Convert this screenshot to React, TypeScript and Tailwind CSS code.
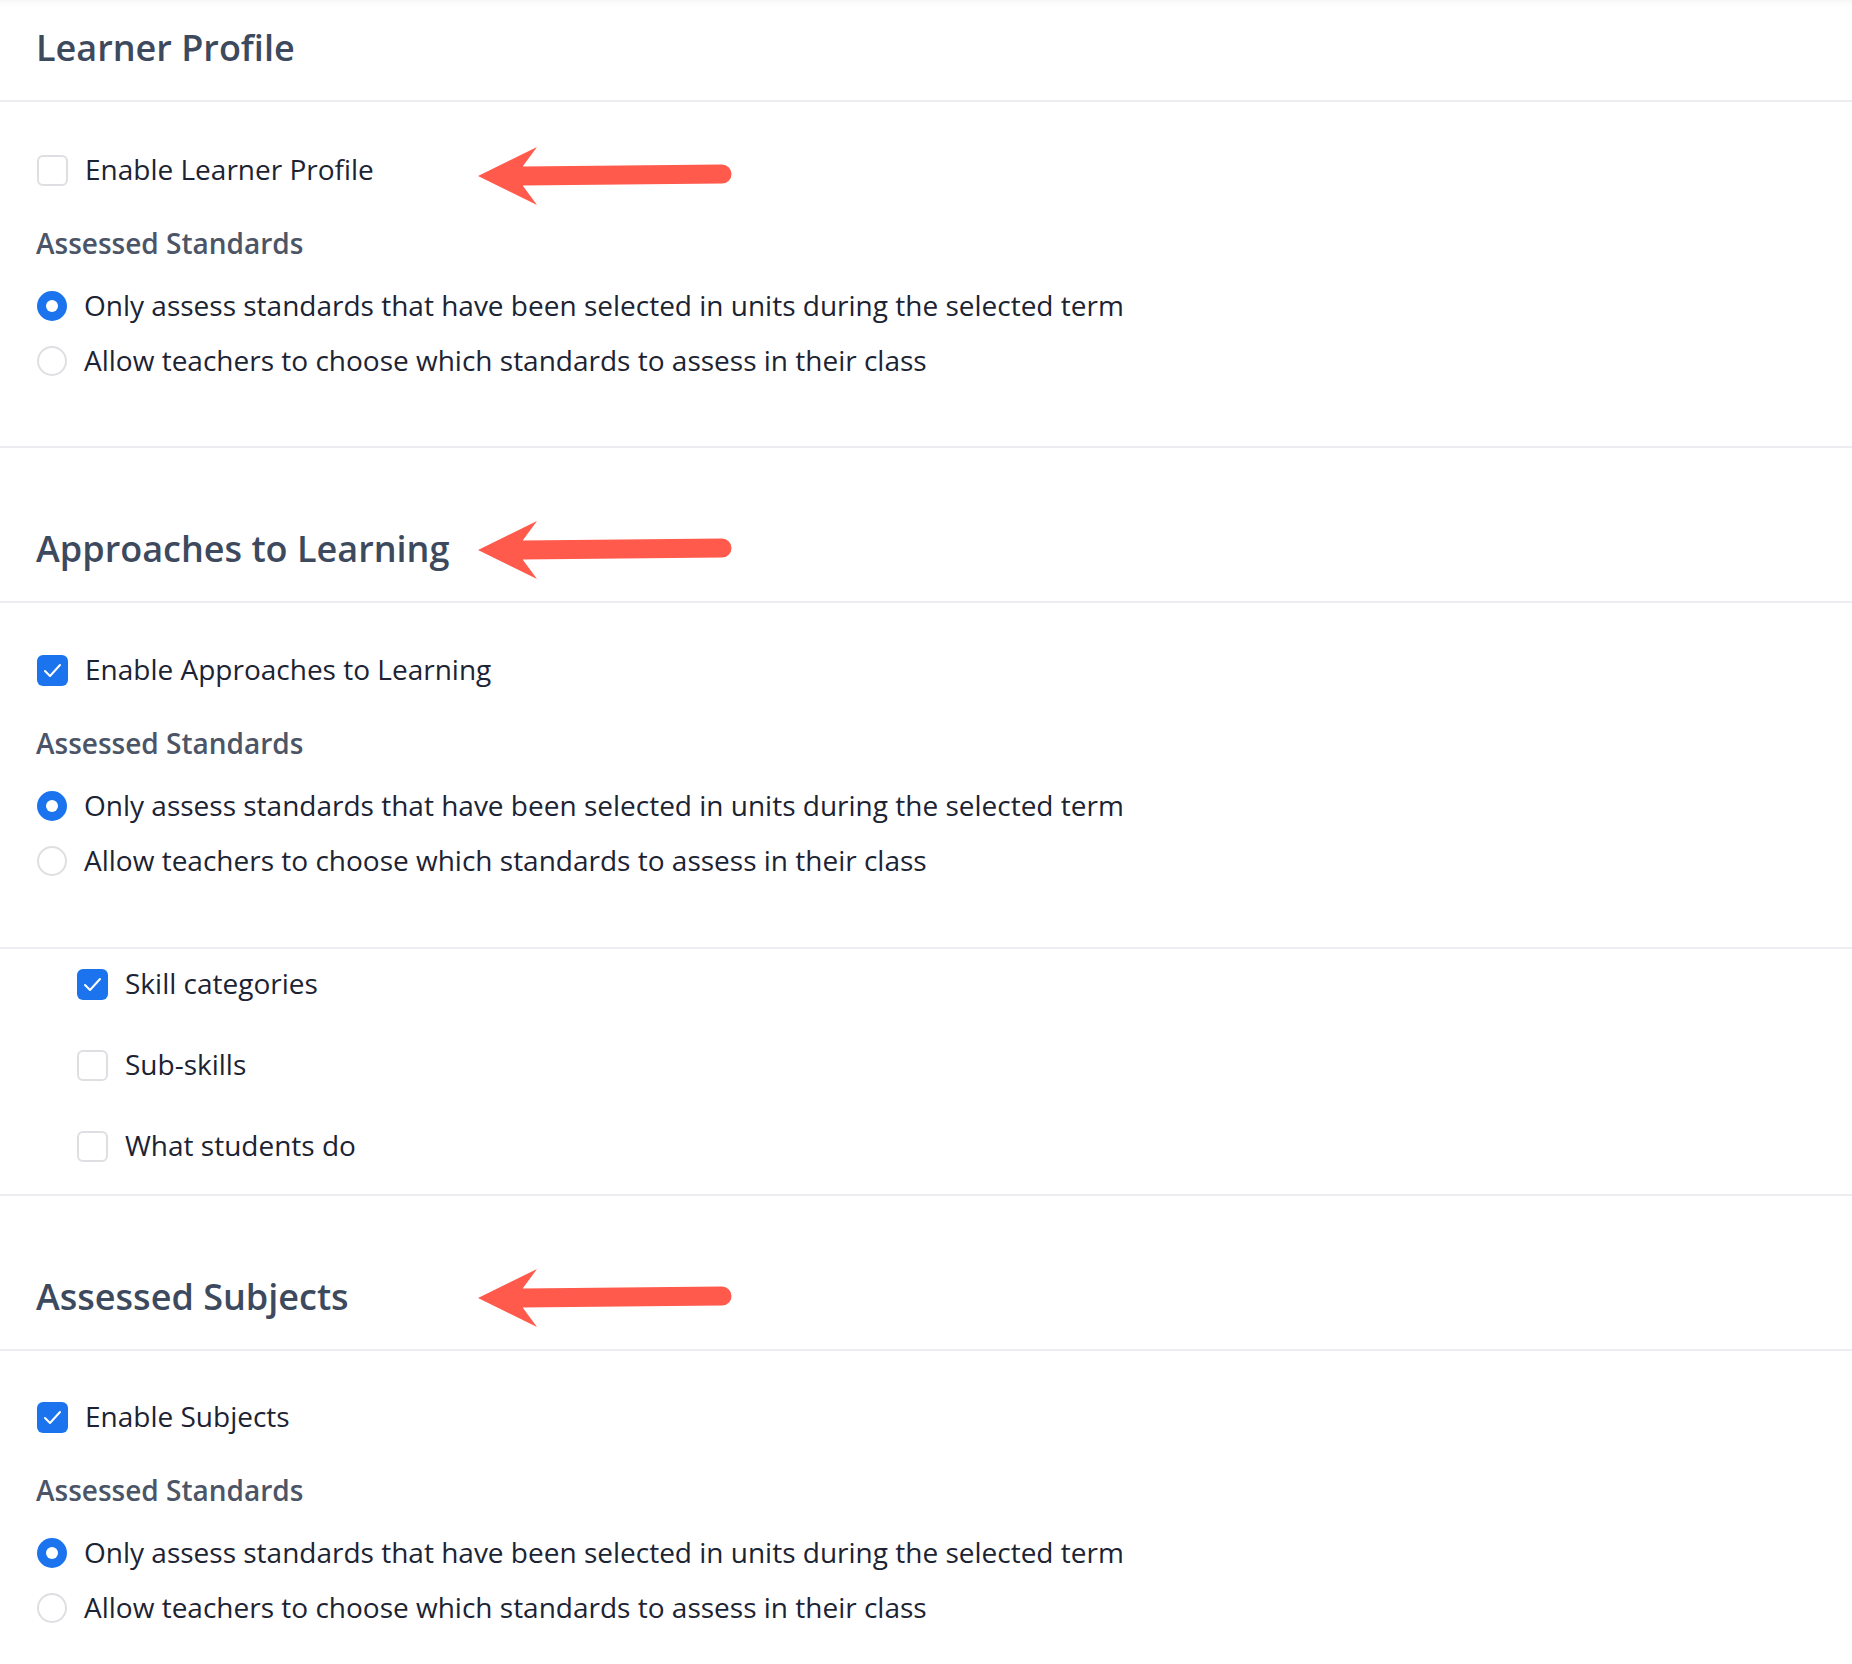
const font = { fontFamily: '"Open Sans", "Noto Sans", sans-serif' };

function Arrow({ className }: { className: string }) {
  return (
    <svg
      className={`absolute ${className}`}
      width="256"
      height="60"
      viewBox="0 0 256 60"
      fill="none"
    >
      <line x1="44" y1="30" x2="244" y2="28" stroke="#ff5a4c" strokeWidth="19" strokeLinecap="round" />
      <polygon points="0,30 59,1 45,20 45,40 59,59" fill="#ff5a4c" />
    </svg>
  );
}

function Checkbox({ checked }: { checked: boolean }) {
  if (checked) {
    return (
      <span className="flex h-[31px] w-[31px] shrink-0 items-center justify-center rounded-[6px] bg-[#1b74ee]">
        <svg width="19" height="15" viewBox="0 0 19 15" fill="none">
          <path d="M2 8 L7 13 L17 2" stroke="white" strokeWidth="2" strokeLinecap="round" strokeLinejoin="round" />
        </svg>
      </span>
    );
  }
  return <span className="h-[31px] w-[31px] shrink-0 rounded-[6px] border-2 border-[#dfdfe3] bg-white" />;
}

function Radio({ checked }: { checked: boolean }) {
  if (checked) {
    return (
      <span className="flex h-[30px] w-[30px] shrink-0 items-center justify-center rounded-full bg-[#1b74ee]">
        <span className="h-[12px] w-[12px] rounded-full bg-white" />
      </span>
    );
  }
  return <span className="h-[30px] w-[30px] shrink-0 rounded-full border-2 border-[#dfdfe3] bg-white" />;
}

function Row({ children, control }: { children: React.ReactNode; control: React.ReactNode }) {
  return (
    <div className="flex h-[40px] items-center gap-[17px] text-[28px] text-[#1c2333]">
      {control}
      <span className="-mt-[2px]">{children}</span>
    </div>
  );
}

function Standards() {
  return (
    <>
      <div className="mt-[33px] -ml-[1px] flex h-[40px] items-center text-[28px] font-semibold text-[#4b5567]">
        Assessed Standards
      </div>
      <div className="mt-[23px] flex flex-col gap-[15px]">
        <Row control={<Radio checked />}>
          Only assess standards that have been selected in units during the selected term
        </Row>
        <Row control={<Radio checked={false} />}>
          Allow teachers to choose which standards to assess in their class
        </Row>
      </div>
    </>
  );
}

function Header({ title, first }: { title: string; first?: boolean }) {
  return (
    <div
      className={`relative border-b-2 border-[#ececf1] pl-[36px] pb-[28px] ${first ? "pt-[24px]" : "pt-[77px]"}`}
    >
      <h2 className="h-[48px] text-[36px] leading-[48px] font-semibold text-[#3d4a5e]">{title}</h2>
      {!first && <Arrow className="left-[478px] top-[72px]" />}
    </div>
  );
}

export default function App() {
  const subSkills = [
    { label: "Skill categories", checked: true },
    { label: "Sub-skills", checked: false },
    { label: "What students do", checked: false },
  ];

  return (
    <div style={font} className="min-h-[1664px] bg-white shadow-[inset_0_7px_6px_-6px_rgba(0,0,0,0.06)]">
      <Header title="Learner Profile" first />
      <div className="border-b-2 border-[#ececf1] pt-[48px] pb-[65px] pl-[37px]">
        <div className="relative">
          <Row control={<Checkbox checked={false} />}>Enable Learner Profile</Row>
          <Arrow className="left-[441px] top-[-4px]" />
        </div>
        <Standards />
      </div>

      <Header title="Approaches to Learning" />
      <div className="border-b-2 border-[#ececf1] pt-[47px] pb-[66px] pl-[37px]">
        <Row control={<Checkbox checked />}>Enable Approaches to Learning</Row>
        <Standards />
      </div>
      <div className="flex flex-col gap-[41px] border-b-2 border-[#ececf1] pt-[15px] pb-[28px] pl-[77px]">
        {subSkills.map((s) => (
          <Row key={s.label} control={<Checkbox checked={s.checked} />}>
            {s.label}
          </Row>
        ))}
      </div>

      <Header title="Assessed Subjects" />
      <div className="pt-[46px] pb-[40px] pl-[37px]">
        <Row control={<Checkbox checked />}>Enable Subjects</Row>
        <Standards />
      </div>
    </div>
  );
}
